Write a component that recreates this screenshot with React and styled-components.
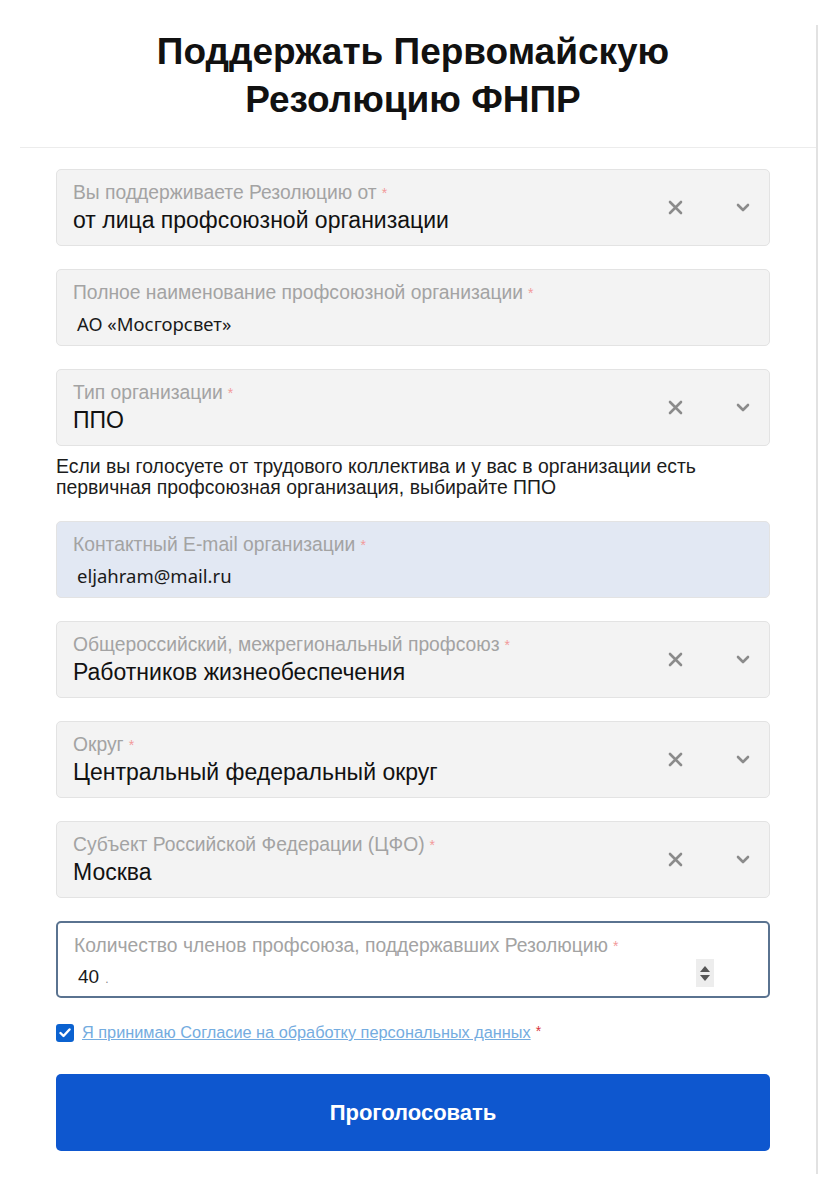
import React from 'react';
import styled, { createGlobalStyle } from 'styled-components';

const GlobalStyle = createGlobalStyle`
  body {
    margin: 0;
    background: #fff;
    font-family: "Liberation Sans", Arial, sans-serif;
  }
`;

const Panel = styled.div`
  width: 816px;
  margin-top: 25px;
  padding-bottom: 23px;
  border-right: 2px solid #e2e2e2;
`;

const Header = styled.div`
  margin-left: 20px;
  padding: 3px 0 23px;
  border-bottom: 1px solid #ececec;
`;

const Title = styled.h1`
  margin: 0 46px 0 36px;
  font-size: 37px;
  line-height: 48px;
  font-weight: 700;
  color: #111;
  text-align: center;
`;

const Form = styled.div`
  display: flex;
  flex-direction: column;
  gap: 23px;
  padding: 21px 46px 0 56px;
`;

const Group = styled.div`
  display: flex;
  flex-direction: column;
  gap: 10px;
`;

const Field = styled.div`
  height: 77px;
  box-sizing: border-box;
  display: flex;
  align-items: center;
  padding: 0 18px 0 16px;
  border-radius: 5px;
  border: ${(p) => (p.$focused ? '2px solid #5a7390' : '1px solid #e3e3e3')};
  background: ${(p) => (p.$focused ? '#fff' : p.$tint ? '#e2e8f3' : '#f3f3f3')};
`;

const Content = styled.div`
  flex: 1;
  align-self: stretch;
  padding-top: 12px;
`;

const Label = styled.div`
  font-size: 19.3px;
  line-height: 22px;
  color: #a3a3a3;
  white-space: nowrap;
`;

const Star = styled.span`
  color: ${(p) => (p.$strong ? '#d8323c' : '#f29a9a')};
  margin-left: 5px;
  font-size: 14px;
  vertical-align: top;
`;

const SelectValue = styled.div`
  margin-top: 1px;
  font-size: 23px;
  line-height: 30px;
  color: #111;
`;

const InputValue = styled.div`
  margin-top: 8px;
  padding-left: 4px;
  font-family: "Noto Sans", "DejaVu Sans", sans-serif;
  font-size: 18.5px;
  line-height: 24px;
  color: #1a1a1a;
`;

const NumberValue = styled(InputValue)`
  font-family: "Liberation Sans", Arial, sans-serif;
  font-size: 19px;
  & span {
    color: #888;
    font-size: 12px;
    margin-left: 6px;
  }
`;

const Actions = styled.div`
  display: flex;
  align-items: center;
  gap: 52px;
  color: #8b8b8b;
`;

const IconBox = styled.span`
  width: 16px;
  height: 16px;
  display: flex;
  align-items: center;
  justify-content: center;
`;

const Spinner = styled.div`
  width: 18px;
  height: 28px;
  align-self: flex-end;
  margin: 0 36px 9px 0;
  background: #ededed;
  display: flex;
  flex-direction: column;
  align-items: center;
  justify-content: center;
  gap: 3px;
`;

const Hint = styled.p`
  margin: 0;
  font-size: 19.4px;
  line-height: 21px;
  color: #1c1c1c;
`;

const Consent = styled.label`
  display: flex;
  align-items: center;
  gap: 8px;
  margin-top: 2px;
  font-size: 16.3px;
`;

const Check = styled.span`
  width: 18px;
  height: 18px;
  border-radius: 3px;
  background: #0b62d0;
  display: flex;
  align-items: center;
  justify-content: center;
`;

const ConsentLink = styled.a`
  color: #74ace0;
  text-decoration: underline;
`;

const SubmitButton = styled.button`
  height: 77px;
  margin-top: 9px;
  border: none;
  border-radius: 5px;
  background: #0e57cf;
  color: #fff;
  font-family: "Liberation Sans", Arial, sans-serif;
  font-weight: 700;
  font-size: 22px;
  cursor: pointer;
`;

function ClearIcon() {
  return (
    <IconBox>
      <svg width="15" height="15" viewBox="0 0 15 15">
        <path d="M2 2 L13 13 M13 2 L2 13" stroke="currentColor" strokeWidth="2.6" strokeLinecap="round" />
      </svg>
    </IconBox>
  );
}

function ChevronIcon() {
  return (
    <IconBox>
      <svg width="14" height="9" viewBox="0 0 14 9">
        <path d="M2 2 L7 7 L12 2" fill="none" stroke="currentColor" strokeWidth="2.6" strokeLinecap="round" strokeLinejoin="round" />
      </svg>
    </IconBox>
  );
}

function SelectField({ label, value }) {
  return (
    <Field>
      <Content>
        <Label>
          {label}
          <Star>*</Star>
        </Label>
        <SelectValue>{value}</SelectValue>
      </Content>
      <Actions>
        <ClearIcon />
        <ChevronIcon />
      </Actions>
    </Field>
  );
}

function TextField({ label, value, tint }) {
  return (
    <Field $tint={tint}>
      <Content>
        <Label>
          {label}
          <Star>*</Star>
        </Label>
        <InputValue>{value}</InputValue>
      </Content>
    </Field>
  );
}

export default function App() {
  return (
    <>
      <GlobalStyle />
      <Panel>
        <Header>
          <Title>
            Поддержать Первомайскую
            <br />
            Резолюцию ФНПР
          </Title>
        </Header>
        <Form>
          <SelectField label="Вы поддерживаете Резолюцию от" value="от лица профсоюзной организации" />
          <TextField label="Полное наименование профсоюзной организации" value="АО «Мосгорсвет»" />
          <Group>
            <SelectField label="Тип организации" value="ППО" />
            <Hint>
              Если вы голосуете от трудового коллектива и у вас в организации есть
              <br />
              первичная профсоюзная организация, выбирайте ППО
            </Hint>
          </Group>
          <TextField label="Контактный E-mail организации" value="eljahram@mail.ru" tint />
          <SelectField label="Общероссийский, межрегиональный профсоюз" value="Работников жизнеобеспечения" />
          <SelectField label="Округ" value="Центральный федеральный округ" />
          <SelectField label="Субъект Российской Федерации (ЦФО)" value="Москва" />
          <Field $focused>
            <Content>
              <Label>
                Количество членов профсоюза, поддержавших Резолюцию
                <Star>*</Star>
              </Label>
              <NumberValue>
                40<span>.</span>
              </NumberValue>
            </Content>
            <Spinner>
              <svg width="10" height="6" viewBox="0 0 10 6">
                <path d="M5 0 L10 6 L0 6 Z" fill="#555" />
              </svg>
              <svg width="10" height="6" viewBox="0 0 10 6">
                <path d="M0 0 L10 0 L5 6 Z" fill="#555" />
              </svg>
            </Spinner>
          </Field>
          <Consent>
            <Check>
              <svg width="12" height="10" viewBox="0 0 12 10">
                <path d="M1.5 5 L4.5 8 L10.5 1.5" fill="none" stroke="#fff" strokeWidth="2.4" strokeLinecap="round" strokeLinejoin="round" />
              </svg>
            </Check>
            <span>
              <ConsentLink href="#">Я принимаю Согласие на обработку персональных данных</ConsentLink>
              <Star $strong>*</Star>
            </span>
          </Consent>
          <SubmitButton>Проголосовать</SubmitButton>
        </Form>
      </Panel>
    </>
  );
}
